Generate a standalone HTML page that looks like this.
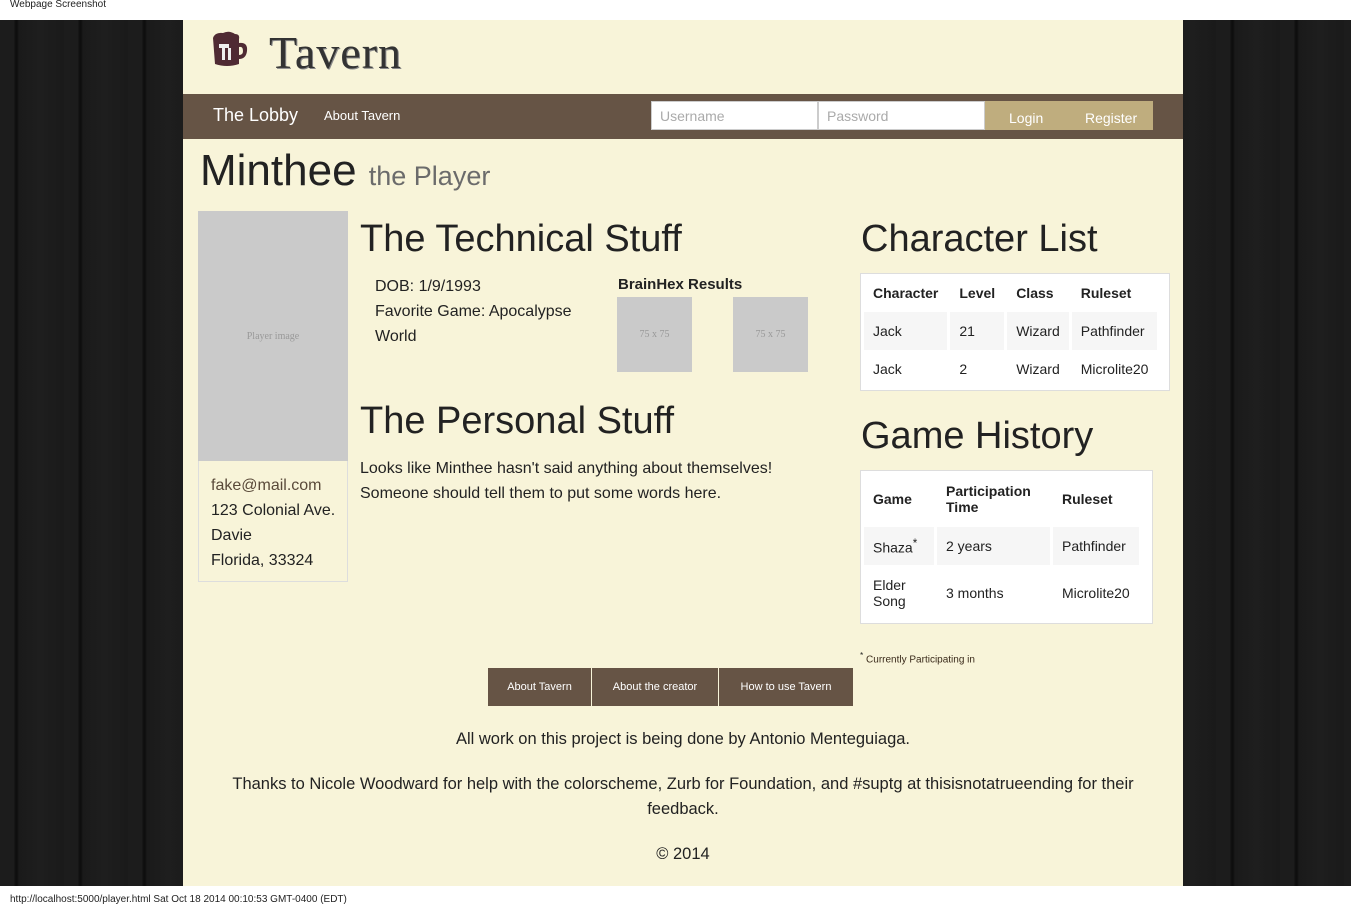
<!DOCTYPE html>
<html><head><meta charset="utf-8"><style>
*{box-sizing:border-box;margin:0;padding:0}
body{width:1351px;height:906px;overflow:hidden;background:#fff;font-family:"Liberation Sans",sans-serif;color:#222;position:relative}
.topbar{position:absolute;left:0;top:0;width:1351px;height:20px;background:#fff;font-size:10px;padding:0 10px;line-height:10px}
.botbar{position:absolute;left:0;top:886px;width:1351px;height:20px;background:#fff;font-size:10px;padding:9px 10px 0;line-height:10px}
.wood{position:absolute;left:0;top:20px;width:1351px;height:866px;background:
repeating-linear-gradient(90deg,#1c1c1c 0px,#1c1c1c 14px,#101010 15px,#0e0e0e 17px,#1a1a1a 19px,#1e1e1e 40px,#1a1a1a 64px)}
.page{position:absolute;left:183px;top:20px;width:1000px;height:866px;background:#f8f4d9}
.a{position:absolute;white-space:nowrap}
.nav{position:absolute;left:0;top:74px;width:1000px;height:45px;background:#665445}
.inp{position:absolute;top:7px;height:29px;background:#fff;border:1px solid #ccc;color:#aaa;font-size:14px;padding:6px 8px}
.btn{position:absolute;top:7px;height:29px;background:#bfad7e;color:#fff;font-size:14px;left:802px;width:168px}
.gray{background:#cacaca;color:#999;font-family:"Liberation Serif",serif;font-size:10px;display:flex;align-items:center;justify-content:center;position:absolute}
.tbl{position:absolute;background:#fff;border:1px solid #ddd;font-size:14px;color:#222;overflow:hidden}
.tbl td,.tbl th{padding:0 9px;text-align:left}
.tbl table{border-collapse:separate;border-spacing:3px 0}
.st{background:#f6f6f6}
.fb{position:absolute;top:648px;height:38px;background:#665445;color:#fff;font-size:11px;line-height:38px;text-align:center}
.c{position:absolute;left:0;width:1000px;text-align:center;font-size:16.5px;color:#222}
</style></head><body>
<div class="topbar">Webpage Screenshot</div>
<div class="wood"></div>
<div class="page">
<svg class="a" style="left:26px;top:10px" width="40" height="40" viewBox="0 0 40 40"><path d="M4 8 Q6 2 14 3 Q20 0 26 4 Q31 4 30 9 L30 34 Q18 38 6 34 Z" fill="#4f2a33"/><path d="M30 13 Q39 12 38 21 Q37 29 30 29 L30 25 Q34 25 34 21 Q34 16 30 17Z" fill="#4f2a33"/><rect x="10" y="14" width="10" height="4" fill="#eee"/><rect x="13" y="14" width="3" height="16" fill="#eee"/><rect x="19" y="18" width="3" height="12" fill="#eee"/></svg>
<div class="a" style="left:86px;top:6px;font-family:'Liberation Serif',serif;font-size:46px;color:#333;letter-spacing:1px;text-shadow:1px 1px 0 #888">Tavern</div>
<div class="nav">
<div class="a" style="left:30px;top:11px;color:#fff;font-size:18px">The Lobby</div>
<div class="a" style="left:141px;top:14px;color:#fff;font-size:13px">About Tavern</div>
<div class="inp" style="left:468px;width:167px">Username</div>
<div class="inp" style="left:635px;width:167px">Password</div>
<div class="btn"><span class="a" style="left:24px;top:9px">Login</span><span class="a" style="left:100px;top:9px">Register</span></div>
</div>
<div class="a" style="left:17px;top:126px;font-size:44px;color:#222">Minthee <span style="font-size:27px;color:#6b6b6b">the Player</span></div>
<div class="gray" style="left:15px;top:191px;width:150px;height:250px">Player image</div>
<div class="a" style="left:15px;top:441px;width:150px;height:121px;border:1px solid #ddd;border-top:none;font-size:16px;line-height:25px;padding:12px 12px">
<span style="color:#5a4a3a">fake@mail.com</span><br>123 Colonial Ave.<br>Davie<br>Florida, 33324</div>
<div class="a" style="left:177px;top:198px;font-size:38px">The Technical Stuff</div>
<div class="a" style="left:192px;top:254px;font-size:16px;line-height:25px">DOB: 1/9/1993<br>Favorite Game: Apocalypse<br>World</div>
<div class="a" style="left:435px;top:256px;font-size:15px;font-weight:bold">BrainHex Results</div>
<div class="gray" style="left:434px;top:277px;width:75px;height:75px">75 x 75</div>
<div class="gray" style="left:550px;top:277px;width:75px;height:75px">75 x 75</div>
<div class="a" style="left:177px;top:380px;font-size:38px">The Personal Stuff</div>
<div class="a" style="left:177px;top:436px;font-size:16px;line-height:25px">Looks like Minthee hasn't said anything about themselves!<br>Someone should tell them to put some words here.</div>
<div class="a" style="left:678px;top:198px;font-size:38px">Character List</div>
<div class="tbl" style="left:677px;top:253px;width:310px;height:118px"><table>
<tr style="height:38px"><th>Character</th><th>Level</th><th>Class</th><th>Ruleset</th></tr>
<tr style="height:38px"><td class="st">Jack</td><td class="st">21</td><td class="st">Wizard</td><td class="st">Pathfinder</td></tr>
<tr style="height:38px"><td>Jack</td><td>2</td><td>Wizard</td><td>Microlite20</td></tr></table></div>
<div class="a" style="left:678px;top:395px;font-size:38px">Game History</div>
<div class="tbl" style="left:677px;top:450px;width:293px;height:154px"><table>
<tr style="height:56px"><th style="width:70px">Game</th><th style="width:113px">Participation<br>Time</th><th>Ruleset</th></tr>
<tr style="height:38px"><td class="st">Shaza<sup>*</sup></td><td class="st">2 years</td><td class="st">Pathfinder</td></tr>
<tr style="height:56px"><td>Elder<br>Song</td><td>3 months</td><td>Microlite20</td></tr></table></div>
<div class="a" style="left:677px;top:630px;font-size:10px;color:#222"><sup>*</sup> <span style="color:#3a2a1a">Currently Participating in</span></div>
<div class="fb" style="left:305px;width:103px">About Tavern</div>
<div class="fb" style="left:409px;width:126px">About the creator</div>
<div class="fb" style="left:536px;width:134px">How to use Tavern</div>
<div class="c" style="top:710px">All work on this project is being done by Antonio Menteguiaga.</div>
<div class="c" style="top:752px;line-height:25px;padding:0 20px">Thanks to Nicole Woodward for help with the colorscheme, Zurb for Foundation, and #suptg at thisisnotatrueending for their feedback.</div>
<div class="c" style="top:825px">© 2014</div>
</div>
<div class="botbar">http://localhost:5000/player.html Sat Oct 18 2014 00:10:53 GMT-0400 (EDT)</div>
</body></html>
